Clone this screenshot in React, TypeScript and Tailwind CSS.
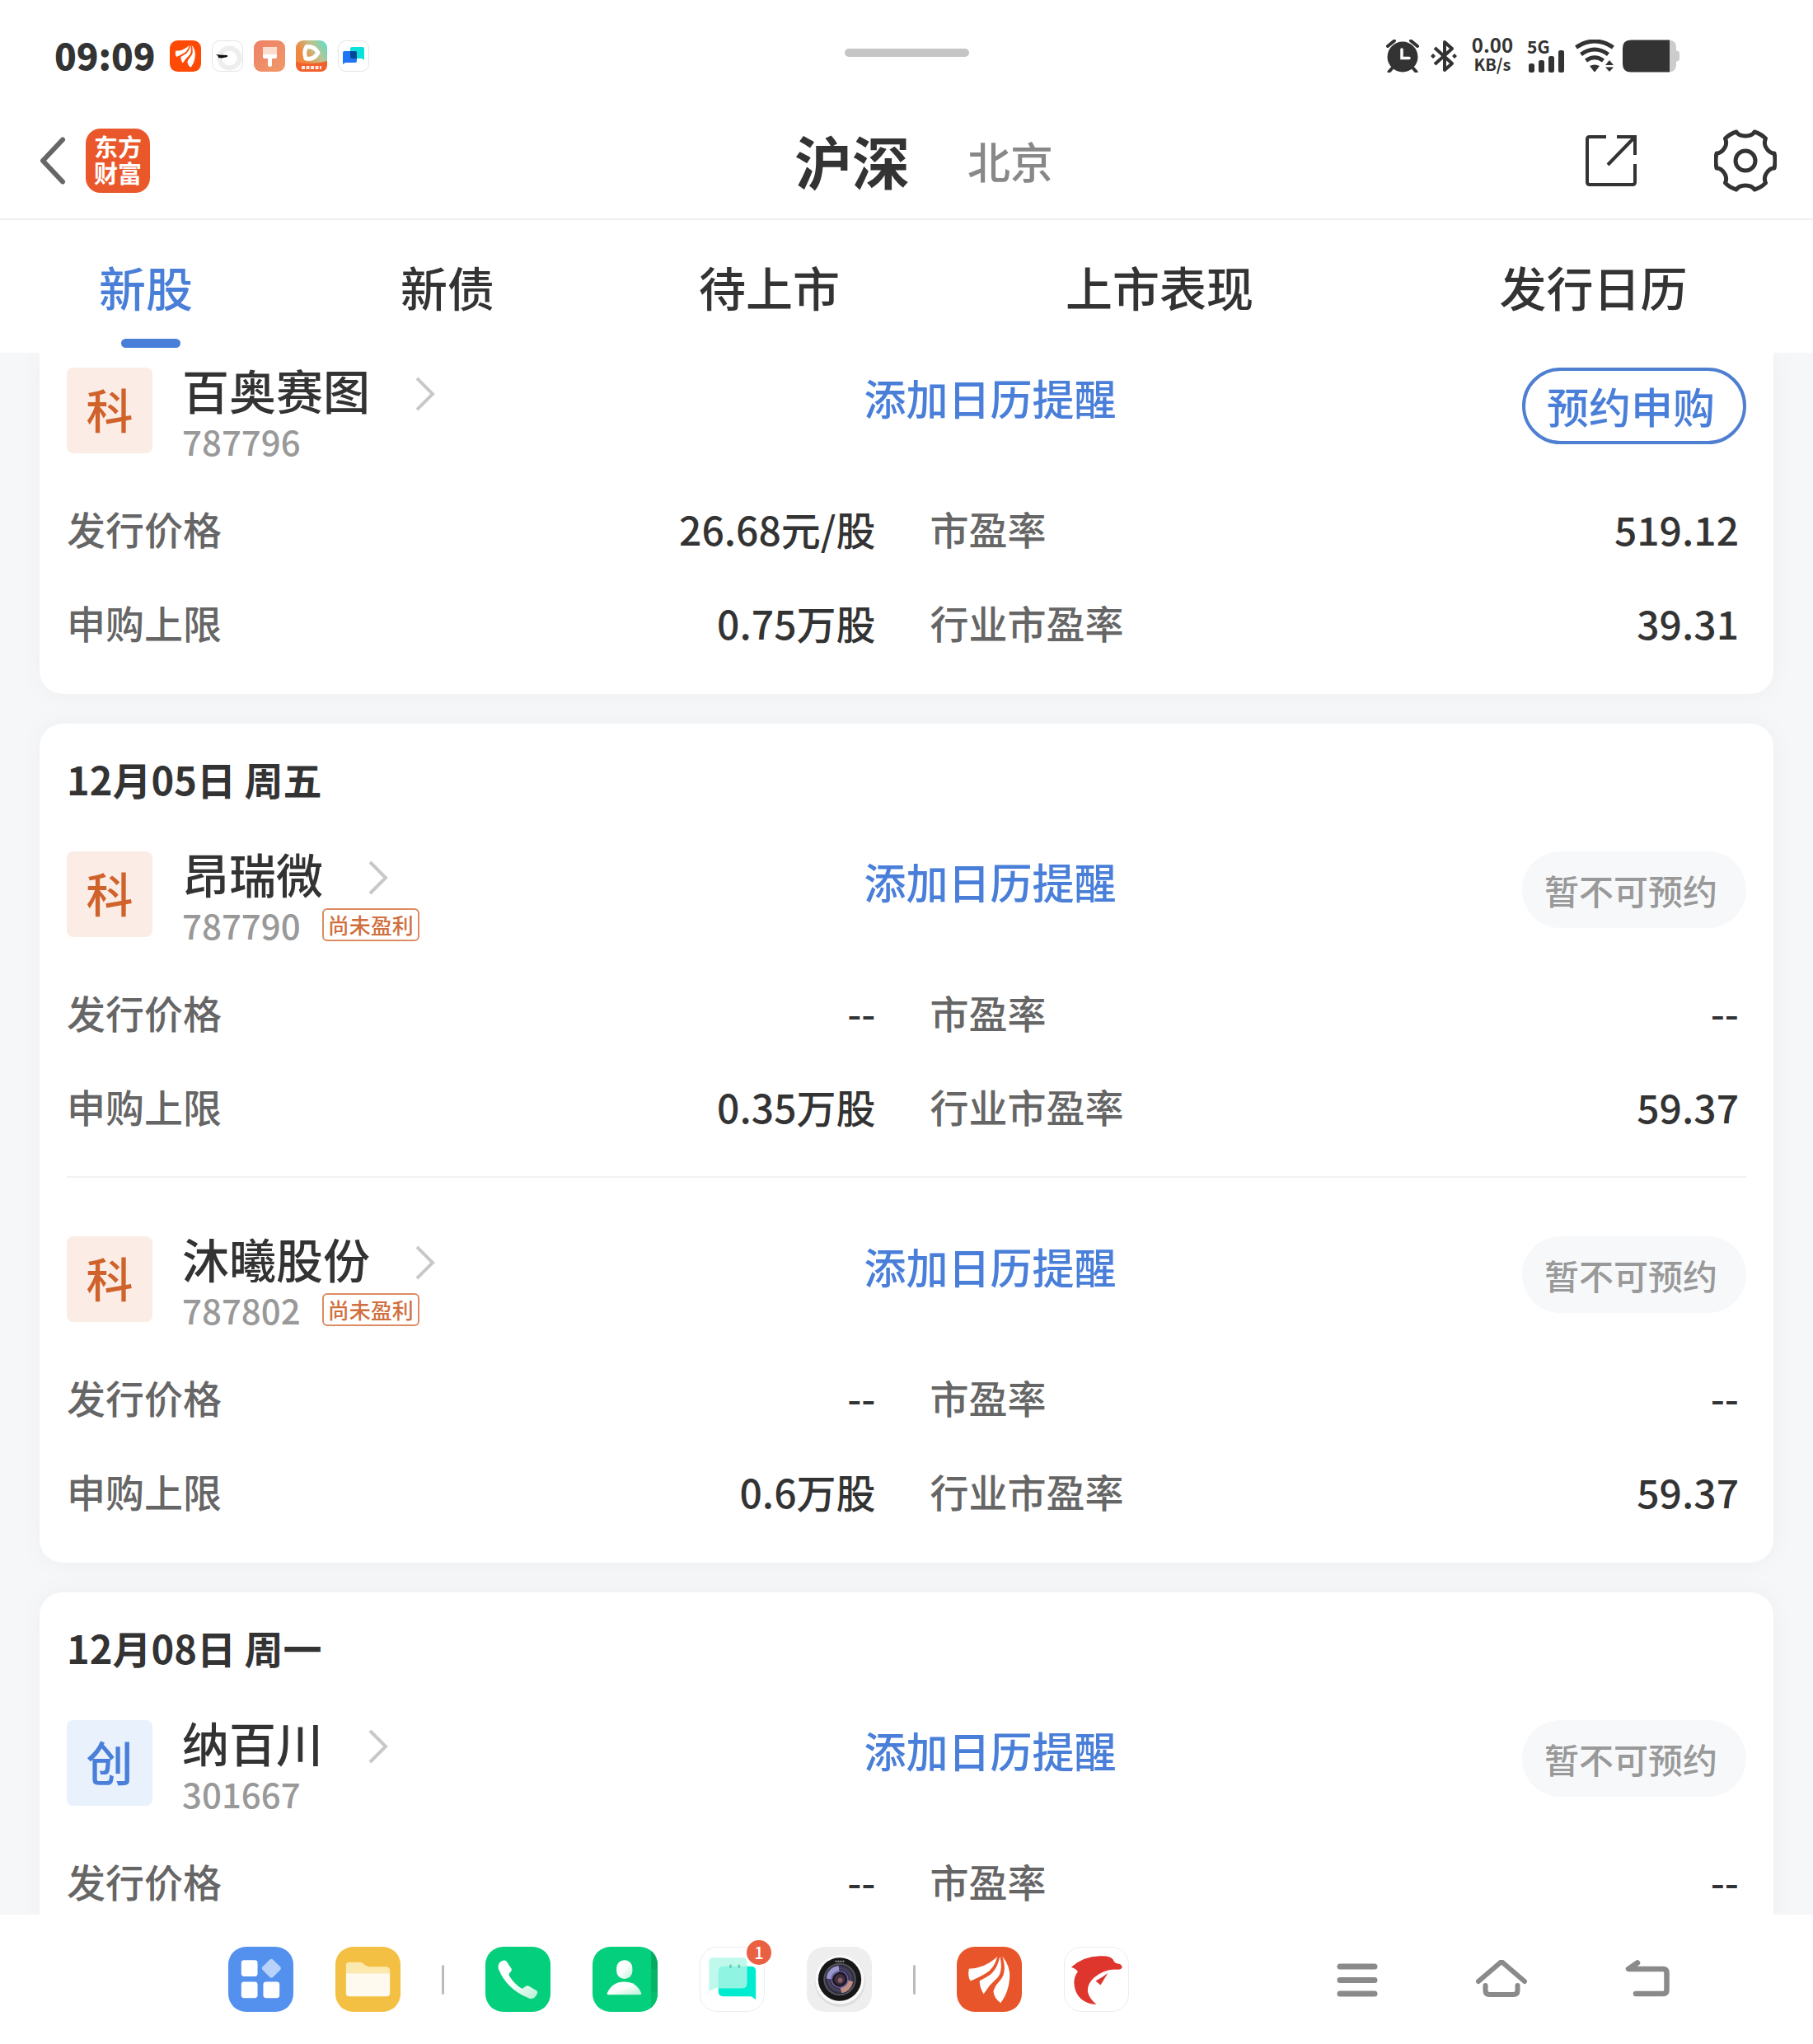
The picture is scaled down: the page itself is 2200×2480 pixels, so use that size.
import type { ReactNode } from "react";

type Stock = {
  board: "科" | "创";
  name: string;
  code: string;
  tag?: string;
  open: boolean;
  rows: [string, string][];
};

type Day = { date?: string; stocks: Stock[] };

const days: Day[] = [
  {
    stocks: [
      {
        board: "科",
        name: "百奥赛图",
        code: "787796",
        open: true,
        rows: [
          ["发行价格", "26.68元/股"],
          ["市盈率", "519.12"],
          ["申购上限", "0.75万股"],
          ["行业市盈率", "39.31"],
        ],
      },
    ],
  },
  {
    date: "12月05日 周五",
    stocks: [
      {
        board: "科",
        name: "昂瑞微",
        code: "787790",
        tag: "尚未盈利",
        open: false,
        rows: [
          ["发行价格", "--"],
          ["市盈率", "--"],
          ["申购上限", "0.35万股"],
          ["行业市盈率", "59.37"],
        ],
      },
      {
        board: "科",
        name: "沐曦股份",
        code: "787802",
        tag: "尚未盈利",
        open: false,
        rows: [
          ["发行价格", "--"],
          ["市盈率", "--"],
          ["申购上限", "0.6万股"],
          ["行业市盈率", "59.37"],
        ],
      },
    ],
  },
  {
    date: "12月08日 周一",
    stocks: [
      {
        board: "创",
        name: "纳百川",
        code: "301667",
        open: false,
        rows: [
          ["发行价格", "--"],
          ["市盈率", "--"],
        ],
      },
    ],
  },
];

const tabs = ["新股", "新债", "待上市", "上市表现", "发行日历"];

function Feathers() {
  return (
    <g fill="#fff">
      <path d="M15 27Q33 27 48 14L50 12Q46 27 36 32.500Q29 37 17 42Q13 37 15 27Z" />
      <path d="M53 12Q49 31 37 37L28 42Q28 50 33 58L36 54Q40 47 47 41Q58 33 53 12Z" />
      <path d="M56 12Q66 24 65 38Q64 56 54 69Q46 64 45 55Q47 48 51 44Q63 33 56 12Z" />
    </g>
  );
}

function StatusBar() {
  return (
    <div className="grid h-[88px] shrink-0 grid-cols-[1fr_auto_1fr] items-end px-[66px]">
      <div className="flex h-10 items-center gap-[13px]">
        <time className="mr-1 pb-1 text-[44px] leading-10 font-black">09:09</time>
        <svg className="size-[38px]" viewBox="0 0 80 80" aria-hidden="true">
          <rect width="80" height="80" rx="20" fill="#fe4a05" />
          <Feathers />
        </svg>
        <svg className="size-[38px]" viewBox="0 0 38 38" aria-hidden="true">
          <rect x="0.500" y="0.500" width="37" height="37" rx="9" fill="#fff" stroke="#e4e4e4" />
          <circle cx="21.500" cy="21.500" r="12" fill="none" stroke="#eee" strokeWidth="6" />
          <path d="M5 17l4 .5 10 .5v2l-7 1.500-4-.5-.5-2z" fill="#111" />
        </svg>
        <svg className="size-[38px]" viewBox="0 0 38 38" aria-hidden="true">
          <defs>
            <linearGradient id="brush" x1="0" y1="0" x2="1" y2="1">
              <stop offset="0" stopColor="#ee8068" />
              <stop offset="1" stopColor="#f09a68" />
            </linearGradient>
          </defs>
          <rect width="38" height="38" rx="9" fill="url(#brush)" />
          <path d="M11 8h17v10H11z" fill="#fbdccf" />
          <path d="M11 17h17v3q0 2-2 2h-4v8q0 2-2.500 2T17 30v-8h-4q-2 0-2-2z" fill="#fff" />
        </svg>
        <svg className="size-[38px]" viewBox="0 0 38 38" aria-hidden="true">
          <defs>
            <linearGradient id="play" x1="0" y1="0.600" x2="1" y2="0">
              <stop offset="0.200" stopColor="#f08840" />
              <stop offset="0.600" stopColor="#bcc490" />
              <stop offset="1" stopColor="#4fe0d0" />
            </linearGradient>
          </defs>
          <rect width="38" height="38" rx="9" fill="url(#play)" />
          <path d="M0 26Q19 31 38 25v4q0 9-9 9H9q-9 0-9-9z" fill="#f2602c" />
          <path d="M13 7.500Q9 14 12 22Q22 24 27 15Q23 7 13 7.500Z" fill="none" stroke="#fff" strokeWidth="5" strokeLinejoin="round" />
          <path d="M7 33h24" stroke="#fff" strokeWidth="4" strokeDasharray="4 1.500" opacity="0.850" />
        </svg>
        <svg className="size-[38px]" viewBox="0 0 38 38" aria-hidden="true">
          <rect x="0.500" y="0.500" width="37" height="37" rx="9" fill="#fff" stroke="#e4e4e4" />
          <path d="M17 8h13q2 0 2 2v14l-3-2H17q-2 0-2-2V10q0-2 2-2z" fill="#0ce0dc" />
          <path d="M8 13h13q2 0 2 2v10q0 2-2 2H9l-3 2V15q0-2 2-2z" fill="#2176f5" />
          <path d="M15 13h6q2 0 2 2v7h-6q-2 0-2-2z" fill="#03479b" />
        </svg>
      </div>
      <div className="mb-[19px] h-[10px] w-[151px] rounded-full bg-[#c5c5c5]" />
      <div className="mr-24 flex h-10 items-center justify-end">
        <svg className="h-10 w-[42px]" viewBox="0 0 42 40" aria-hidden="true">
          <circle cx="21" cy="21" r="18.500" fill="#333" />
          <path d="M3 8l8-6.500M39 8l-8-6.500M8 35l-3.500 4M34 35l3.500 4" stroke="#333" strokeWidth="4" strokeLinecap="round" />
          <path d="M20 12v10.500h9" fill="none" stroke="#fff" strokeWidth="3.500" strokeLinecap="round" />
        </svg>
        <svg className="ml-3 h-10 w-[34px]" viewBox="0 0 34 40" aria-hidden="true">
          <path d="M6 10l21 19-9 8V3l9 8L6 30" fill="none" stroke="#333" strokeWidth="4" strokeLinejoin="round" />
          <path d="M4 17l3 3-3 3-3-3zM30 17l3 3-3 3-3-3z" fill="#333" />
        </svg>
        <div className="ml-4 flex w-[52px] flex-col items-center pb-1 font-bold">
          <span className="text-[24px] leading-6">0.00</span>
          <span className="text-[20px] leading-6">KB/s</span>
        </div>
        <div className="ml-4 flex h-10 w-[46px] flex-col justify-between">
          <div className="h-4 text-[21px] leading-4 font-bold">5G</div>
          <svg className="-mt-3 h-7 w-[46px]" viewBox="0 0 46 28" aria-hidden="true">
            <g fill="#333">
              <rect x="2" y="17" width="7" height="11" rx="2.500" />
              <rect x="14" y="13" width="7" height="15" rx="2.500" />
              <rect x="26" y="8" width="7" height="20" rx="2.500" />
              <rect x="38" y="1" width="7" height="27" rx="2.500" />
            </g>
          </svg>
        </div>
        <svg className="ml-3 h-10 w-12" viewBox="0 0 48 40" aria-hidden="true">
          <path d="M1.500 9.500Q24-5.500 46.500 9.500M7.500 18Q24 6 40.500 18M13.500 25.500Q24 18 34.500 25.500" fill="none" stroke="#333" strokeWidth="5" />
          <path d="M18 32q6-3 12 0l-5 6.500q-1 1-2 0zM42 25l5 6H37zM42 39l5-5.500H37z" fill="#333" />
        </svg>
        <svg className="ml-[10px] h-10 w-[69px]" viewBox="0 0 69 40" aria-hidden="true">
          <path d="M57 .5q8 1 8 9v4q4 0 4 3v7q0 3-4 3v4q0 8-8 9z" fill="#ccc" />
          <path d="M10 .5h47v39H10q-10 0-10-10v-19q0-10 10-10z" fill="#333" />
        </svg>
      </div>
    </div>
  );
}

function Header() {
  return (
    <header className="grid h-[179px] shrink-0 grid-cols-[1fr_auto_1fr] items-center border-b-2 border-[#efefef] pt-9 pr-11 pl-12">
      <div className="flex items-center gap-6">
        <button type="button" aria-label="返回">
          <svg className="h-[58px] w-8" viewBox="0 0 32 58" fill="none" aria-hidden="true">
            <path d="M28 3.500L4 29l24 25.500" stroke="#666" strokeWidth="6" strokeLinecap="round" strokeLinejoin="round" />
          </svg>
        </button>
        <div className="flex size-[78px] flex-col items-center justify-center rounded-[18px] bg-[#ea572a] pb-1 text-[29px] leading-8 font-bold text-white">
          <span>东方</span>
          <span>财富</span>
        </div>
      </div>
      <div className="flex items-center gap-[70px] pl-[38px]">
        <button type="button" className="text-[70px] leading-[80px] font-bold">
          沪深
        </button>
        <button type="button" className="text-[52px] leading-[80px] text-[#888]">
          北京
        </button>
      </div>
      <div className="flex items-center justify-end gap-[94px]">
        <button type="button" aria-label="分享">
          <svg className="size-[62px]" viewBox="0 0 62 62" fill="none" stroke="#333" strokeWidth="4" aria-hidden="true">
            <path d="M25 2H5Q2 2 2 5v52q0 3 3 3h52q3 0 3-3V35M38 2h22v22M59 3L27 36" />
          </svg>
        </button>
        <button type="button" aria-label="设置">
          <svg className="size-[76px]" viewBox="0 0 76 76" fill="none" stroke="#333" strokeWidth="5" strokeLinejoin="round" aria-hidden="true">
            <path d="M27 3Q30 8 38 8T49 3Q57 5.500 62.500 11Q60 17 63 22Q67 29 73 29Q75 38 73 47Q67 47 63 54Q60 59 62.500 65Q57 70.500 49 73Q46 68 38 68T27 73Q19 70.500 13.500 65Q16 59 13 54Q9 47 3 47Q1 38 3 29Q9 29 13 22Q16 17 13.500 11Q19 5.500 27 3Z" />
            <circle cx="38" cy="38" r="12" />
          </svg>
        </button>
      </div>
    </header>
  );
}

function Tabs() {
  return (
    <nav className="grid h-[161px] shrink-0 grid-cols-[366fr_366fr_415fr_532fr_521fr] bg-white">
      {tabs.map((t, i) => (
        <button
          key={t}
          type="button"
          className={
            "flex flex-col items-center pt-10 text-[57px] leading-[80px] " +
            (i === 0 ? "text-[#4a7fd9]" : "text-[#333]")
          }
        >
          <span className="pr-3">{t}</span>
          {i === 0 && <span className="mt-6 h-[11px] w-[72px] rounded-full bg-[#4a7fd9]" />}
        </button>
      ))}
    </nav>
  );
}

function StockItem({ stock }: { stock: Stock }) {
  return (
    <article>
      <div className="grid grid-cols-[967fr_1070fr]">
        <div className="flex items-start">
          <div
            className={
              "flex size-[104px] items-center justify-center rounded-lg pb-[6px] text-[57px] leading-[98px] " +
              (stock.board === "科" ? "bg-[#fbede5] text-[#d0622c]" : "bg-[#e9f1fc] text-[#4a7fd9]")
            }
          >
            {stock.board}
          </div>
          <div className="ml-9">
            <a href={"#" + stock.code} className="flex h-[52px] items-center gap-[55px]">
              <span className="text-[57px] leading-[52px]">{stock.name}</span>
              <svg className="mt-3 h-[42px] w-6" viewBox="0 0 24 42" fill="none" aria-hidden="true">
                <path d="M2 2l19 19L2 40" stroke="#c8c8c8" strokeWidth="4" />
              </svg>
            </a>
            <div className="mt-[15px] flex h-11 items-center gap-[26px]">
              <span className="text-[42px] leading-[44px] text-[#999]">{stock.code}</span>
              {stock.tag && (
                <span className="rounded-md border-2 border-[#dc8c62] px-[5px] text-[26px] leading-[36px] text-[#d0703f]">
                  {stock.tag}
                </span>
              )}
            </div>
          </div>
        </div>
        <div className="flex items-start justify-between">
          <a href="#calendar" className="text-[51px] leading-[72px] text-[#4a7fd9]">
            添加日历提醒
          </a>
          {stock.open ? (
            <button
              type="button"
              className="h-[93px] w-[272px] rounded-full border-4 border-[#4f7fd0] pr-2 text-[51px] leading-[85px] text-[#4a7fd9]"
            >
              预约申购
            </button>
          ) : (
            <button type="button" disabled className="h-[93px] w-[272px] rounded-full bg-[#f7f8fa] pr-2 text-[42px] leading-[93px] text-[#999]">
              暂不可预约
            </button>
          )}
        </div>
      </div>
      <dl className="mt-[27px] mr-[9px] grid grid-cols-2 gap-x-[66px]">
        {stock.rows.map(([k, v]) => (
          <div key={k} className="flex h-[114px] items-center justify-between">
            <dt className="text-[47px] leading-[60px] text-[#666]">{k}</dt>
            <dd className="text-[48px] leading-[60px]">{v}</dd>
          </div>
        ))}
      </dl>
    </article>
  );
}

function DayCard({ day }: { day: Day }) {
  return (
    <section
      className={
        "mx-12 bg-white px-[33px] pb-[30px] shadow-[0_0_32px_rgba(30,40,60,0.04)] " +
        (day.date ? "rounded-[28px] pt-9" : "rounded-b-[28px] pt-[18px]")
      }
    >
      {day.date && <h2 className="mb-[57px] text-[47px] leading-[62px] font-bold">{day.date}</h2>}
      {day.stocks.map((s, i) => (
        <div key={s.code} className={i > 0 ? "mt-7 border-t-2 border-[#f1f1f1] pt-[71px]" : ""}>
          <StockItem stock={s} />
        </div>
      ))}
    </section>
  );
}

function Tile({ label, count, children }: { label: string; count?: number; children: ReactNode }) {
  return (
    <button type="button" aria-label={label} className="relative">
      <svg className="size-[79px]" viewBox="0 0 80 80" aria-hidden="true">
        {children}
      </svg>
      {count && (
        <span className="absolute -top-2 -right-2 flex size-[30px] items-center justify-center rounded-full bg-[#ea6043] text-[20px] leading-[30px] text-white">
          {count}
        </span>
      )}
    </button>
  );
}

function Dock() {
  return (
    <footer className="flex h-[157px] shrink-0 items-center justify-between bg-white pr-[174px] pl-[277px]">
      <div className="flex items-center gap-[51px]">
        <Tile label="应用">
          <rect width="80" height="80" rx="22" fill="#5491ee" />
          <g fill="#fff">
            <rect x="16" y="16.500" width="20" height="20" rx="3.500" />
            <rect x="16" y="43" width="20" height="20" rx="3.500" />
            <rect x="43" y="43" width="20" height="20" rx="3.500" />
          </g>
          <rect x="44" y="17.500" width="18" height="18" rx="3" fill="#b9d2fb" transform="rotate(45 53 26.500)" />
        </Tile>
        <Tile label="文件管理">
          <rect width="80" height="80" rx="22" fill="#f3c043" />
          <path d="M13 34V23q0-4 4-4h13q2 0 4 1.500l4 3q2 1 4 1h20q5 0 5 5V34z" fill="#fbe9b0" />
          <path d="M13 33h54v24q0 4-4 4H17q-4 0-4-4z" fill="#fefaf0" />
        </Tile>
        <span className="-mx-px h-9 w-[3px] rounded-full bg-[#bbb]" />
        <Tile label="电话">
          <defs>
            <linearGradient id="fade" x1="0.300" y1="0.200" x2="1" y2="1">
              <stop offset="0.300" stopColor="#fff" />
              <stop offset="1" stopColor="#b5f0d5" />
            </linearGradient>
          </defs>
          <rect width="80" height="80" rx="22" fill="#04cf7c" />
          <path d="M18 19Q23 15 26 18L32 27Q33 29 30 32Q28 34 30 37Q36 46 44 51Q46 52 48 49.500Q51 47 54 48.500L63 54Q65 56 63 59Q59 66 53 63Q26 52 16 27Q15 22 18 19Z" fill="url(#fade)" />
        </Tile>
        <Tile label="联系人">
          <clipPath id="tile">
            <rect width="80" height="80" rx="22" />
          </clipPath>
          <rect width="80" height="80" rx="22" fill="#04cf7c" />
          <g clipPath="url(#tile)">
            <path d="M72 0h8v28h-8z" fill="#08aa60" />
            <path d="M72 28h8v28h-8z" fill="#06b468" />
            <path d="M72 56h8v24h-8z" fill="#08bd6e" />
          </g>
          <rect x="29.500" y="16.500" width="19.500" height="23" rx="9.500" fill="url(#fade)" />
          <path d="M18 57Q24 43 39 43T60 57Q60.500 59 58.500 59h-39Q17.500 59 18 57Z" fill="url(#fade)" />
        </Tile>
        <Tile label="信息" count={1}>
          <rect x="0.500" y="0.500" width="79" height="79" rx="21" fill="#fff" stroke="#ececec" />
          <path d="M29 24h34q6 0 6 6v35l-4-3q-1-1-3-1H29q-6 0-6-6V30q0-6 6-6z" fill="#00ebcf" />
          <path d="M17.500 13.500H52q6 0 6 6V45q0 6-6 6H21q-3 0-5 1.500l-4.500 2.500V19.500q0-6 6-6z" fill="#baf8ea" opacity="0.920" />
          <path d="M23 51V30q0-6 6-6h29v21q0 6-6 6z" fill="#8ff4e1" />
          <path d="M38 23v2M48.500 23v2" stroke="#5fc9b4" strokeWidth="2.500" strokeLinecap="round" />
        </Tile>
        <Tile label="相机">
          <defs>
            <radialGradient id="lens">
              <stop offset="0" stopColor="#18131b" />
              <stop offset="0.250" stopColor="#4d3646" />
              <stop offset="0.450" stopColor="#15131c" />
              <stop offset="0.750" stopColor="#4b4565" />
              <stop offset="1" stopColor="#252432" />
            </radialGradient>
          </defs>
          <rect width="80" height="80" rx="22" fill="#eee" />
          <circle cx="41" cy="43" r="31" fill="#dedede" />
          <circle cx="40.500" cy="40.500" r="30" fill="#fafafa" />
          <circle cx="40.500" cy="40" r="26.500" fill="#171717" />
          <circle cx="40.500" cy="40" r="20" fill="#55555e" />
          <circle cx="40.500" cy="40" r="18" fill="url(#lens)" />
          <path d="M24 39Q25 26 39 23l1 8Q32 33 31 40z" fill="#aaa6e0" opacity="0.850" />
          <path d="M57 43Q54 55 43 57l-2-7Q48 48 51 41z" fill="#d79c8b" opacity="0.850" />
          <circle cx="40.500" cy="40" r="10" fill="none" stroke="#6960a0" strokeWidth="1.500" />
          <circle cx="41" cy="41" r="3" fill="#88606b" />
          <path d="M35 18h11" stroke="#999" strokeWidth="2" strokeDasharray="2 1" />
        </Tile>
        <span className="-mx-px h-9 w-[3px] rounded-full bg-[#bbb]" />
        <Tile label="东方财富">
          <rect width="80" height="80" rx="22" fill="#e9552a" />
          <Feathers />
        </Tile>
        <Tile label="海豚股票">
          <rect x="0.500" y="0.500" width="79" height="79" rx="21" fill="#fff" stroke="#ececec" />
          <path d="M9 25Q24 12 44 11.500Q57 10.500 60.500 16Q62 20 65 20.500Q71 21 71.500 25Q71 28 66 28Q50 27 37 38Q20 54 40 71Q17 69 13 49Q11 38 17 31Q17 28 9 25Z" fill="#de352c" />
          <path d="M54 32.500L45 47L39 42Q47 38 54 32.500Z" fill="#de352c" />
        </Tile>
      </div>
      <div className="flex items-center gap-[118px]">
        <button type="button" aria-label="最近任务">
          <svg className="h-12 w-[50px]" viewBox="0 0 50 48" aria-hidden="true">
            <path d="M4 8h42M4 24.500h42M4 41h42" stroke="#8a8a8a" strokeWidth="7" strokeLinecap="round" />
          </svg>
        </button>
        <button type="button" aria-label="主页">
          <svg className="h-12 w-16" viewBox="0 0 64 48" fill="none" stroke="#8a8a8a" strokeWidth="6" strokeLinecap="round" strokeLinejoin="round" aria-hidden="true">
            <path d="M4 26L32 2l28 24M12.500 31v6q0 5 5 5h29q5 0 5-5v-6" />
          </svg>
        </button>
        <button type="button" aria-label="后退">
          <svg className="h-12 w-[54px]" viewBox="0 0 54 48" fill="none" stroke="#8a8a8a" strokeWidth="6.500" strokeLinecap="round" strokeLinejoin="round" aria-hidden="true">
            <path d="M15 3.500L4 11h42q4.500 0 4.500 4.500v21q0 4.500-4.500 4.500H13" />
          </svg>
        </button>
      </div>
    </footer>
  );
}

export default function App() {
  return (
    <div className="flex h-screen flex-col overflow-hidden bg-white font-['Noto_Sans_CJK_SC',sans-serif] font-medium text-[#333]">
      <StatusBar />
      <Header />
      <Tabs />
      <main className="flex flex-1 flex-col gap-9 overflow-hidden bg-[#f6f7f9]">
        {days.map((d) => (
          <DayCard key={d.stocks[0].code} day={d} />
        ))}
      </main>
      <Dock />
    </div>
  );
}
